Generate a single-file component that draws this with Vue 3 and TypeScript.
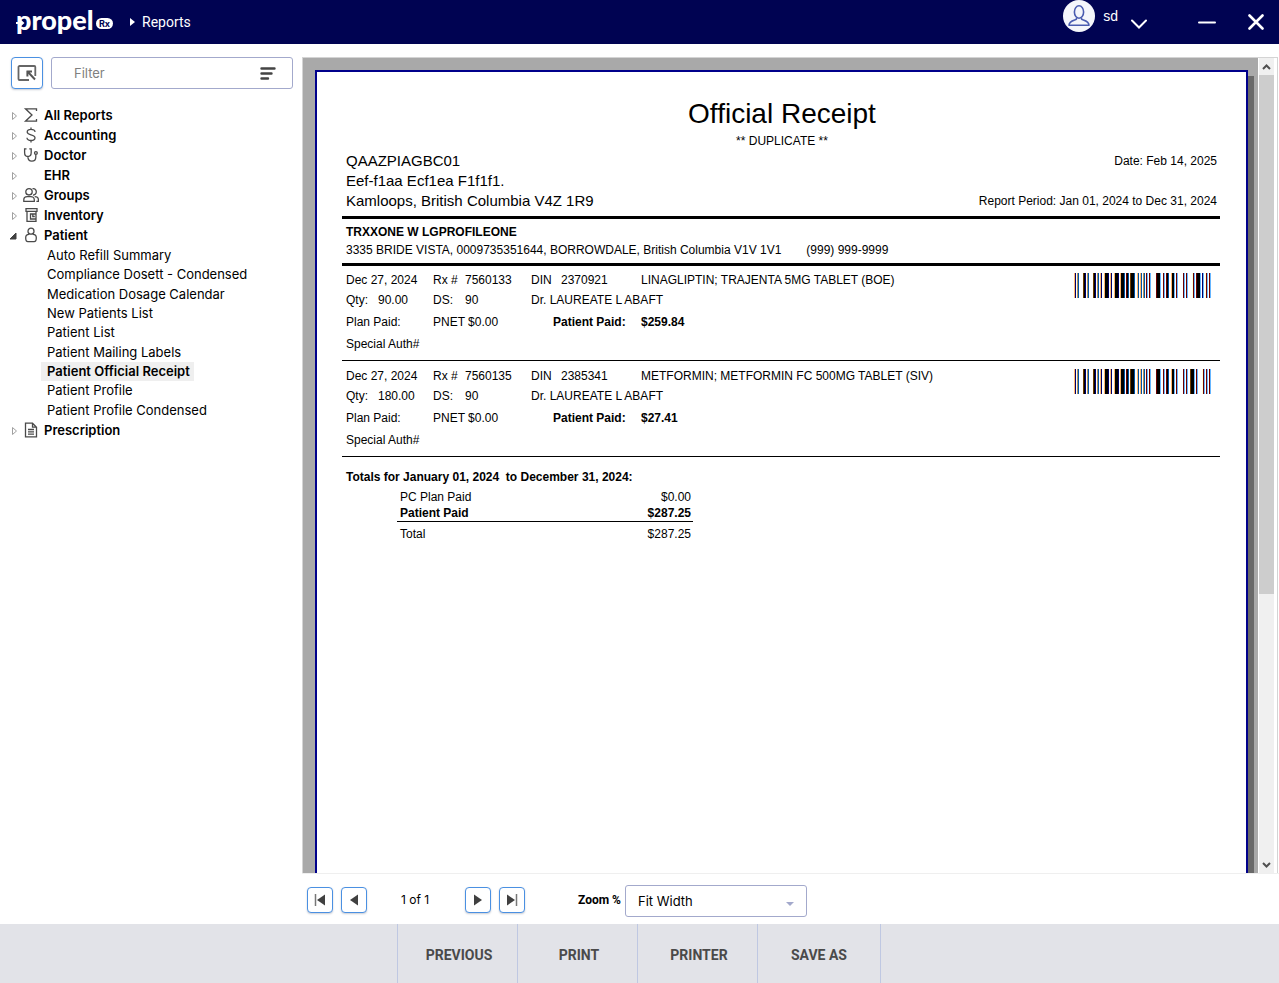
<script setup lang="ts">
import { ref } from 'vue'

interface Category {
  name: string
  icon: string
  open?: boolean
  reports?: string[]
}

interface Claim {
  date: string
  rx: string
  din: string
  drug: string
  qty: string
  days: string
  doctor: string
  plan: string
  paid: string
  bars: string
}

const filter = ref('')
const zoom = ref('Fit Width')
const selected = ref('Patient Official Receipt')

const categories = ref<Category[]>([
  { name: 'All Reports', icon: 'sum' },
  { name: 'Accounting', icon: 'dollar' },
  { name: 'Doctor', icon: 'doctor' },
  { name: 'EHR', icon: '' },
  { name: 'Groups', icon: 'groups' },
  { name: 'Inventory', icon: 'inventory' },
  {
    name: 'Patient',
    icon: 'patient',
    open: true,
    reports: [
      'Auto Refill Summary',
      'Compliance Dosett - Condensed',
      'Medication Dosage Calendar',
      'New Patients List',
      'Patient List',
      'Patient Mailing Labels',
      'Patient Official Receipt',
      'Patient Profile',
      'Patient Profile Condensed',
    ],
  },
  { name: 'Prescription', icon: 'prescription' },
])

const sharedBars =
  'onwtbwwwwsknwtbwwwwsknwtbwonwwokkknwonwwokkknwokkkbwmkbwskkkbwwobwobwtbwmcwmcwwwwwmkkkcwwmcwmkbwwokkcwmcwwwwwmcwmc'

const claims: Claim[] = [
  {
    date: 'Dec 27, 2024', rx: '7560133', din: '2370921',
    drug: 'LINAGLIPTIN; TRAJENTA 5MG TABLET (BOE)',
    qty: '90.00', days: '90', doctor: 'Dr. LAUREATE L ABAFT',
    plan: 'PNET $0.00', paid: '$259.84',
    bars: sharedBars + 'wwwwymcwmkkkcwncwymcwmc',
  },
  {
    date: 'Dec 27, 2024', rx: '7560135', din: '2385341',
    drug: 'METFORMIN; METFORMIN FC 500MG TABLET (SIV)',
    qty: '180.00', days: '90', doctor: 'Dr. LAUREATE L ABAFT',
    plan: 'PNET $0.00', paid: '$27.41',
    bars: sharedBars + 'wwskkkcwmcwwwwymcwmcwmc',
  },
]

const barColors: Record<string, string> = {
  k: '#000000', n: '#00006c', b: '#0054a8', c: '#66b6ff', m: '#6c0000',
  s: '#6c3a00', o: '#ffb66c', t: '#b0905a', y: '#ffffd8', w: '#ffffff',
}
</script>

<template>
  <div class="app">
    <header class="topbar">
      <div class="logo">
        <span class="logo-word">propel</span>
        <svg class="logo-arrow" width="10" height="8" viewBox="0 0 10 8"><path d="M0 4h6M4 1.2 7 4 4 6.8" fill="none" stroke="#fff" stroke-width="2" /></svg>
        <span class="logo-rx">Rx</span>
      </div>
      <svg class="crumb" width="5" height="8" viewBox="0 0 5 8"><path d="M0 0l5 4-5 4z" fill="#fff" /></svg>
      <h1>Reports</h1>
      <button class="user" type="button">
        <svg width="32" height="32" viewBox="0 0 32 32">
          <circle cx="16" cy="16" r="16" fill="#f4f6fb" />
          <ellipse cx="16" cy="12" rx="4.6" ry="6.2" fill="none" stroke="#4a5cb0" stroke-width="1.6" />
          <path d="M13.500 17.500v1.500c0 1.200-7.500 1-7.500 6.300h20c0-5.300-7.500-5.100-7.500-6.300v-1.500" fill="none" stroke="#4a5cb0" stroke-width="1.6" stroke-linejoin="round" />
        </svg>
        <span>sd</span>
        <svg class="chev" width="16" height="10" viewBox="0 0 16 10"><path d="M1 1.500l7 7 7-7" fill="none" stroke="#fff" stroke-width="2" stroke-linecap="round" /></svg>
      </button>
      <button class="win" type="button" aria-label="Minimize">
        <svg width="18" height="16" viewBox="0 0 18 16"><path d="M1 8.500h16" stroke="#fff" stroke-width="2" stroke-linecap="round" /></svg>
      </button>
      <button class="win close" type="button" aria-label="Close">
        <svg width="16" height="16" viewBox="0 0 16 16"><path d="M1.500 1.500l13 13M14.500 1.500l-13 13" stroke="#fff" stroke-width="2.600" stroke-linecap="round" /></svg>
      </button>
    </header>

    <div class="body">
      <aside class="sidebar">
        <div class="tools">
          <button class="square expand" type="button" aria-label="Collapse panel">
            <svg width="20" height="18" viewBox="0 0 20 18">
              <path d="M12 16H2.500a1 1 0 0 1-1-1V3a1 1 0 0 1 1-1h14.800a1 1 0 0 1 1 1v9" fill="none" stroke="#666" stroke-width="1.800" />
              <path d="M9.500 7.500H15M10.400 7v5.500M10.500 7.500l7.500 8" fill="none" stroke="#555" stroke-width="2" />
            </svg>
          </button>
          <label class="filter">
            <input v-model="filter" type="text" placeholder="Filter" aria-label="Filter" />
            <svg width="16" height="13" viewBox="0 0 16 13"><path d="M1.500 1.500h13M1.500 6.500h10M1.500 11.500h6.500" stroke="#444" stroke-width="2.400" stroke-linecap="round" /></svg>
          </label>
        </div>
        <ul class="tree">
          <li v-for="c in categories" :key="c.name">
            <button class="category" type="button" :aria-expanded="!!c.open" @click="c.open = !c.open">
              <svg class="twisty" width="8" height="10" viewBox="0 0 8 10">
                <path v-if="c.open" d="M7 2v6H1z" fill="#404040" stroke="#404040" />
                <path v-else d="M3.500 1.500v7l4-3.500z" fill="#fff" stroke="#a0a0a0" />
              </svg>
              <svg class="icon" width="16" height="16" viewBox="0 0 16 16" fill="none" stroke="#4a4a4a" stroke-width="1.300">
                <path v-if="c.icon === 'sum'" d="M13.500 4V1.800H2.500L9 8l-6.500 6.200h11V12" />
                <path v-else-if="c.icon === 'dollar'" d="M8 .5v2M8 13.500v2M12 5c0-1.600-1.700-2.600-4-2.600S4.200 3.500 4.200 5.100C4.200 8.600 12 7 12 10.800c0 1.700-1.700 2.700-4 2.700s-4-1-4-2.800" />
                <g v-else-if="c.icon === 'doctor'">
                  <path d="M3.500 1.800H1.600v3.700c0 2.400 1.300 4 3.200 4s3.400-1.600 3.400-4V1.800H6.300M4.900 9.500c0 2.900 1.500 4.600 3.900 4.600s4-1.600 4-4.200V7.500" />
                  <circle cx="12.900" cy="6" r="1.400" />
                </g>
                <g v-else-if="c.icon === 'groups'">
                  <circle cx="6" cy="4.800" r="3.200" />
                  <path d="M.8 14.300v-1.500c0-2 1.700-3.100 3.500-3.100h3.500c2 0 3.500 1.200 3.500 3.100v1.500zM9.500 1.900c2-.9 3.800.7 3.800 2.900S11.500 8.300 10 7.900M11.700 9.700c2.300 0 3.700 1.200 3.700 3.100v1.500h-2" />
                </g>
                <g v-else-if="c.icon === 'inventory'">
                  <path d="M3 1.700h11v2.600H3zM4 4.300v10h9v-10" />
                  <path d="M13 7H7.500v5H13M9.800 7v2.500h2" />
                </g>
                <g v-else-if="c.icon === 'patient'">
                  <circle cx="8" cy="4.200" r="3" />
                  <path d="M6 7.300c-2 0-3.300 1.500-3.300 3.500s.5 3.900 2.200 3.900h6.200c1.700 0 2.200-1.900 2.200-3.900S12 7.300 10 7.300" />
                </g>
                <path v-else-if="c.icon === 'prescription'" d="M2.500 1.200h7l4 4v9.600h-11zM9.500 1.200v4h4M5 7.500h6M5 9.800h6M5 12.100h6" />
              </svg>
              <span>{{ c.name }}</span>
            </button>
            <ul v-if="c.open && c.reports" class="reports">
              <li v-for="r in c.reports" :key="r">
                <button type="button" :class="{ current: r === selected }" @click="selected = r">{{ r }}</button>
              </li>
            </ul>
          </li>
        </ul>
      </aside>

      <main class="main">
        <div class="viewer">
          <div class="canvas">
            <article class="paper">
              <div class="title">
                <h2>Official Receipt</h2>
                <p>** DUPLICATE **</p>
              </div>
              <div class="pharmacy">
                <address>
                  <span>QAAZPIAGBC01</span>
                  <span>Eef-f1aa Ecf1ea F1f1f1.</span>
                  <span>Kamloops, British Columbia V4Z 1R9</span>
                </address>
                <div class="dates">
                  <span>Date: Feb 14, 2025</span>
                  <span>Report Period: Jan 01, 2024 to Dec 31, 2024</span>
                </div>
              </div>
              <div class="person">
                <strong>TRXXONE W LGPROFILEONE</strong>
                <p><span>3335 BRIDE VISTA, 0009735351644, BORROWDALE, British Columbia V1V 1V1</span><span>(999) 999-9999</span></p>
              </div>
              <section v-for="c in claims" :key="c.rx" class="claim">
                <div class="fields">
                  <span class="two">{{ c.date }}</span><span>Rx #</span><span>{{ c.rx }}</span><span>DIN</span><span>{{ c.din }}</span><span>{{ c.drug }}</span>
                  <span>Qty:</span><span>{{ c.qty }}</span><span>DS:</span><span>{{ c.days }}</span><span class="rest">{{ c.doctor }}</span>
                  <span class="two">Plan Paid:</span><span class="two">{{ c.plan }}</span><strong class="two paid">Patient Paid:</strong><strong>{{ c.paid }}</strong>
                  <span class="all">Special Auth#</span>
                </div>
                <svg class="barcode" width="137" height="25" viewBox="0 0 137 25" shape-rendering="crispEdges" role="img" aria-label="Barcode">
                  <rect v-for="(b, i) in c.bars.split('')" :key="i" :x="i" y="0" width="1" height="25" :fill="barColors[b]" />
                </svg>
              </section>
              <section class="totals">
                <h3>Totals for January 01, 2024 &nbsp;to December 31, 2024:</h3>
                <table>
                  <tbody>
                    <tr><th>PC Plan Paid</th><td>$0.00</td></tr>
                    <tr class="bold"><th>Patient Paid</th><td>$287.25</td></tr>
                    <tr class="sum"><th>Total</th><td>$287.25</td></tr>
                  </tbody>
                </table>
              </section>
            </article>
          </div>
          <div class="scrollbar">
            <button type="button" aria-label="Scroll up"><svg width="9" height="6" viewBox="0 0 9 6"><path d="M1 5l3.500-3.500L8 5" fill="none" stroke="#505050" stroke-width="2" /></svg></button>
            <div class="track"><div class="thumb"></div></div>
            <button type="button" aria-label="Scroll down"><svg width="9" height="6" viewBox="0 0 9 6"><path d="M1 1l3.500 3.500L8 1" fill="none" stroke="#505050" stroke-width="2" /></svg></button>
          </div>
        </div>

        <div class="pager">
          <button class="square" type="button" aria-label="First page"><svg width="12" height="12" viewBox="0 0 12 12"><path d="M1.500 0v12" stroke="#777" stroke-width="1.500" /><path d="M11 .5v11L3 6z" fill="#404040" /></svg></button>
          <button class="square" type="button" aria-label="Previous page"><svg width="12" height="12" viewBox="0 0 12 12"><path d="M10 .5v11L2 6z" fill="#404040" /></svg></button>
          <span class="count">1 of 1</span>
          <button class="square" type="button" aria-label="Next page"><svg width="12" height="12" viewBox="0 0 12 12"><path d="M2 .5v11L10 6z" fill="#404040" /></svg></button>
          <button class="square" type="button" aria-label="Last page"><svg width="12" height="12" viewBox="0 0 12 12"><path d="M10.500 0v12" stroke="#777" stroke-width="1.500" /><path d="M1 .5v11L9 6z" fill="#404040" /></svg></button>
          <label for="zoom">Zoom %</label>
          <div class="select">
            <select id="zoom" v-model="zoom">
              <option>Fit Width</option>
              <option>100%</option>
              <option>150%</option>
            </select>
            <svg width="8" height="4" viewBox="0 0 8 4"><path d="M0 0h8L4 4z" fill="#a3a9cc" /></svg>
          </div>
        </div>
      </main>
    </div>

    <footer class="actions">
      <button type="button">PREVIOUS</button>
      <button type="button">PRINT</button>
      <button type="button">PRINTER</button>
      <button type="button">SAVE AS</button>
    </footer>
  </div>
</template>

<style>
body {
  margin: 0;
  background: #fff;
}
</style>

<style scoped>
* {
  box-sizing: border-box;
}
.app {
  display: flex;
  flex-direction: column;
  height: 100vh;
  font: 13px/20px Inter, Roboto, sans-serif;
  color: #000;
}
button {
  margin: 0;
  padding: 0;
  border: 0;
  background: none;
  font: inherit;
  color: inherit;
}
svg {
  display: block;
  flex: none;
}
h1, h2, h3, p, ul {
  margin: 0;
  padding: 0;
}
ul {
  list-style: none;
}

.topbar {
  display: flex;
  align-items: center;
  flex: none;
  height: 44px;
  padding: 0 15px 0 16px;
  background: #000352;
  color: #fff;
}
.logo {
  position: relative;
  display: flex;
  align-items: center;
  width: 98px;
}
.logo-word {
  font: 900 27px/36px Lato, sans-serif;
  margin-top: -4px;
}
.logo-arrow {
  position: absolute;
  left: 0;
  top: 13px;
}
.logo-rx {
  position: absolute;
  right: 1px;
  top: 12px;
  width: 17px;
  border-radius: 6px;
  background: #fff;
  color: #000352;
  font: bold 9px/11px Inter, sans-serif;
  text-align: center;
}
.crumb {
  margin: 0 7px 0 16px;
}
h1 {
  flex: 1;
  font: 14px/20px Roboto, sans-serif;
}
.user {
  display: flex;
  align-items: center;
  align-self: flex-start;
  gap: 8px;
  font: 14px/20px "Liberation Sans", Arial, sans-serif;
}
.chev {
  margin: 16px 0 0 5px;
}
.win {
  margin-left: 51px;
}
.close {
  margin-left: 32px;
}

.body {
  display: flex;
  flex: 1;
  min-height: 0;
}
.sidebar {
  flex: none;
  width: 302px;
  padding: 13px 9px 0 11px;
}
.tools {
  display: flex;
  gap: 8px;
  margin-bottom: 16px;
}
.square {
  display: flex;
  align-items: center;
  justify-content: center;
  flex: none;
  width: 26px;
  height: 26px;
  border: 1px solid #4a90e2;
  border-radius: 4px;
  background: #fff;
  box-shadow: 0 1px 2px #c8ccd4;
}
.expand {
  width: 32px;
  height: 32px;
}
.filter {
  display: flex;
  align-items: center;
  flex: 1;
  min-width: 0;
  height: 32px;
  padding: 0 16px 0 22px;
  border: 1px solid #a3a9cc;
  border-radius: 3px;
}
.filter input {
  flex: 1;
  width: 100%;
  min-width: 0;
  padding: 0;
  border: 0;
  outline: 0;
  font: inherit;
}
.filter input::placeholder {
  color: #808080;
}
.category {
  display: flex;
  align-items: center;
  height: 20px;
  font-weight: 600;
}
.twisty {
  margin: 1px 4px 0 -2px;
}
.icon {
  margin: 0 5px 0 2px;
}
.reports {
  display: grid;
  grid-auto-rows: 1fr;
  height: 175px;
  padding: 1px 0 0 30px;
  line-height: 19px;
}
.reports li {
  display: flex;
}
.reports button {
  padding: 0 4px 0 6px;
}
.reports .current {
  background: #efefef;
  font-weight: 600;
}

.main {
  display: flex;
  flex: 1;
  flex-direction: column;
  min-width: 0;
}
.viewer {
  display: flex;
  flex: 1;
  min-height: 0;
  margin: 13px 1px 0 0;
  padding-right: 3px;
  border: 1px solid #d4d4d4;
  border-width: 1px 1px 0 1px;
}
.canvas {
  display: flex;
  flex: 1;
  padding: 12px 10px 0 12px;
  overflow: hidden;
  background: #a9a9a9;
}
.paper {
  flex: 1;
  padding: 24px 26px 0 25px;
  border: 2px solid #00008b;
  border-bottom: 0;
  background: #fff;
  box-shadow: 6px 6px 0 #696969;
  font: 12px/20px "Liberation Sans", Arial, sans-serif;
}
.scrollbar {
  display: flex;
  flex-direction: column;
  flex: none;
  width: 15px;
  margin-left: 1px;
  background: #f0f0f0;
}
.scrollbar button {
  display: flex;
  align-items: center;
  justify-content: center;
  height: 17px;
}
.track {
  flex: 1;
}
.thumb {
  height: 66.4%;
  background: #cdcdcd;
}

.title {
  text-align: center;
  padding-left: 2px;
}
h2 {
  font: 28px/35px "Liberation Sans", Arial, sans-serif;
}
.pharmacy {
  display: flex;
  justify-content: space-between;
  padding: 0 3px 5px 4px;
  border-bottom: 3px solid #000;
}
address {
  display: flex;
  flex-direction: column;
  font-style: normal;
  font-size: 15px;
}
.dates {
  display: flex;
  flex-direction: column;
  justify-content: space-between;
  text-align: right;
}
.person {
  padding: 4px 4px;
  border-bottom: 3px solid #000;
  line-height: 18px;
}
.person p {
  display: flex;
  gap: 25px;
}
.person strong {
  display: block;
}
.claim {
  display: flex;
  justify-content: space-between;
  padding: 5px 9px 6px 4px;
  border-bottom: 1px solid #000;
}
.person + .claim {
  margin-top: -1px;
}
.fields {
  display: grid;
  grid-template-columns: 32px 55px 32px 66px 30px 80px auto;
  grid-template-rows: 20px 20px 24px 20px;
  align-items: center;
  white-space: nowrap;
}
.two {
  grid-column: span 2;
}
.rest {
  grid-column: span 3;
}
.all {
  grid-column: 1 / -1;
}
.paid {
  padding-left: 22px;
}
.barcode {
  margin-top: 3px;
}
.totals {
  padding: 10px 4px 0;
}
h3 {
  font: bold 12px/20px "Liberation Sans", Arial, sans-serif;
}
table {
  width: 296px;
  margin: 2px 0 0 51px;
  border-collapse: collapse;
  line-height: 16px;
}
th, td {
  padding: 0 2px 0 3px;
  font-weight: normal;
  text-align: left;
}
td {
  text-align: right;
}
.bold th, .bold td {
  font-weight: bold;
}
.sum th, .sum td {
  padding-top: 4px;
  border-top: 1px solid #000;
}

.pager {
  display: flex;
  align-items: center;
  flex: none;
  gap: 8px;
  height: 51px;
  padding: 2px 0 0 5px;
  border-top: 1px solid #efefef;
}
.count {
  width: 82px;
  padding-left: 26px;
  font-size: 12px;
}
.pager label {
  width: 47px;
  margin-left: 45px;
  font: bold 12px/20px Roboto, sans-serif;
  white-space: nowrap;
}
.select {
  position: relative;
  width: 182px;
  margin: 2px 0 0 -8px;
}
select {
  width: 100%;
  height: 32px;
  padding: 0 12px;
  border: 1px solid #a3a9cc;
  border-radius: 3px;
  background: #fff;
  appearance: none;
  font: inherit;
  color: inherit;
}
.select svg {
  position: absolute;
  right: 13px;
  top: 17px;
  pointer-events: none;
}

.actions {
  display: flex;
  justify-content: center;
  flex: none;
  height: 59px;
  padding-right: 1px;
  background: #e2e3e8;
}
.actions button {
  width: 120px;
  padding: 3px 0 0 3px;
  border-left: 1px solid #bfc8e2;
  color: #4a4a4a;
  font: bold 14px/20px Roboto, sans-serif;
}
.actions button:last-child {
  width: 124px;
  padding-left: 0;
  border-right: 1px solid #bfc8e2;
}
</style>
